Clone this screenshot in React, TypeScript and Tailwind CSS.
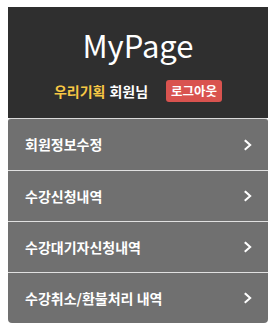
import React from "react";

const menus = ["회원정보수정", "수강신청내역", "수강대기자신청내역", "수강취소/환불처리 내역"];

function Chevron() {
  return (
    <svg width="8" height="12" viewBox="0 0 8 12" fill="none">
      <path d="M1.5 1.8 L6.2 6 L1.5 10.2" stroke="#fff" strokeWidth="2" strokeLinecap="square" />
    </svg>
  );
}

export default function App() {
  return (
    <div className="w-[276px] h-[329px] bg-white pt-[7px] px-[8px] font-['Noto_Sans_CJK_KR','Noto_Sans',sans-serif]">
      {/* header */}
      <div className="bg-[#2f2f2f] h-[111px] flex flex-col items-center">
        <div className="mt-[20px] text-[31px] leading-[36px] text-white">MyPage</div>
        <div className="mt-[17px] flex items-center">
          <span className="text-[14px] font-bold text-[#f7c744]">우리기획</span>
          <span className="ml-[4px] text-[14px] font-bold text-white">회원님</span>
          <span className="ml-[18px] bg-[#d9534f] text-white text-[12.5px] font-bold rounded-[3px] px-[5px] h-[22px] flex items-center">
            로그아웃
          </span>
        </div>
      </div>

      {/* menu */}
      <div className="bg-[#707070] rounded-b-[4px] rounded-t-[3px] border-t border-[#d9d9d9]">
        {menus.map((m, i) => (
          <div
            key={m}
            className={`h-[51px] flex items-center justify-between pl-[17px] pr-[16px] ${i > 0 ? "border-t border-[#e0e0e0]" : ""}`}
          >
            <span className="text-[14px] font-bold text-white">{m}</span>
            <Chevron />
          </div>
        ))}
      </div>
    </div>
  );
}
